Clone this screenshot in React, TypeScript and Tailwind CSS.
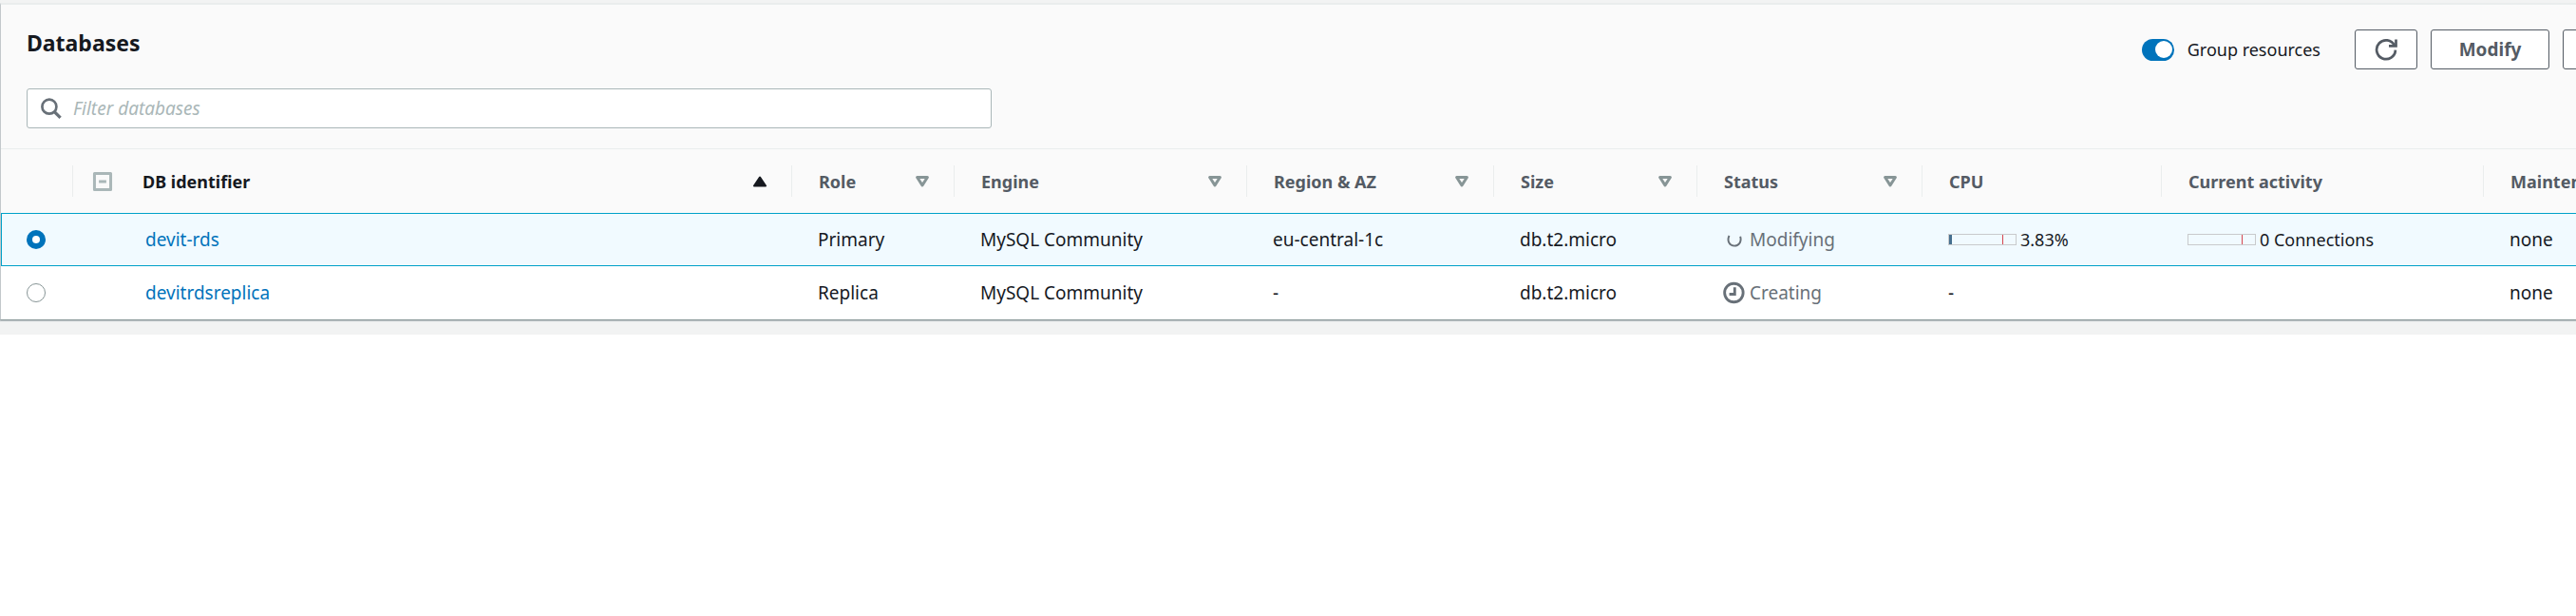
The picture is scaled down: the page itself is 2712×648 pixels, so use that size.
import { useState, type ReactNode } from "react";

type Sort = "asc" | "none" | null;

const columns: { label: string; width: string; sort: Sort }[] = [
  { label: "DB identifier", width: "w-[757px]", sort: "asc" },
  { label: "Role", width: "w-[171px]", sort: "none" },
  { label: "Engine", width: "w-[308px]", sort: "none" },
  { label: "Region & AZ", width: "w-[260px]", sort: "none" },
  { label: "Size", width: "w-[214px]", sort: "none" },
  { label: "Status", width: "w-[237px]", sort: "none" },
  { label: "CPU", width: "w-[252px]", sort: null },
  { label: "Current activity", width: "w-[339px]", sort: null },
  { label: "Maintenance", width: "w-auto", sort: null },
];

function Icon({ children, className = "" }: { children: ReactNode; className?: string }) {
  return (
    <svg
      viewBox="0 0 16 16"
      className={`size-6 shrink-0 ${className}`}
      fill="none"
      stroke="currentColor"
      strokeWidth="2"
      aria-hidden="true"
    >
      {children}
    </svg>
  );
}

function SortIcon({ sort }: { sort: Sort }) {
  return sort === "asc" ? (
    <Icon className="text-[#16191f]">
      <path d="M4 11h8L8 5z" fill="currentColor" strokeWidth="1.4" strokeLinejoin="round" />
    </Icon>
  ) : (
    <Icon className="text-[#879596]">
      <path d="M4.4 5h7.2L8 10.6z" strokeWidth="2" strokeLinejoin="round" />
    </Icon>
  );
}

function Meter({ fill, label }: { fill: number; label: string }) {
  return (
    <div className="flex items-center gap-1 text-[18px]">
      <svg width="72" height="12" aria-hidden="true" shapeRendering="crispEdges">
        <rect x="0.5" y="0.5" width="71" height="11" fill="none" stroke="#c8cacc" />
        <rect x="1" y="1" width={fill} height="10" fill="#466f8f" />
        <rect x="57" y="1" width="1" height="10" fill="#d64550" />
      </svg>
      <span>{label}</span>
    </div>
  );
}

const rows = [
  {
    id: "devit-rds",
    role: "Primary",
    region: "eu-central-1c",
    status: "Modifying",
    cpu: <Meter fill={3} label="3.83%" />,
    activity: <Meter fill={0} label="0 Connections" />,
  },
  {
    id: "devitrdsreplica",
    role: "Replica",
    region: "-",
    status: "Creating",
    cpu: "-",
    activity: "",
  },
];

function StatusIcon({ status }: { status: string }) {
  return status === "Modifying" ? (
    <Icon>
      <path d="M4.3 5.2C2.6 9 4.6 12.4 8 12.4C11.2 12.4 13.2 9.4 12.1 5.8" strokeWidth="1.3" />
    </Icon>
  ) : (
    <Icon>
      <circle cx="7.6" cy="8" r="6.5" strokeWidth="1.9" />
      <path d="M8.2 4.2v4.8H4.4" strokeWidth="1.9" />
    </Icon>
  );
}

const button =
  "flex h-[42px] shrink-0 items-center justify-center rounded-[3px] border border-[#545b64] bg-white text-[19px] font-bold text-[#545b64]";

export default function App() {
  const [selected, setSelected] = useState("devit-rds");
  const [grouped, setGrouped] = useState(true);

  return (
    <main className="overflow-hidden bg-[#f2f3f3] pb-[15px] font-['Noto_Sans','Open_Sans',sans-serif] text-[18px] leading-[26px] text-[#16191f]">
      <section className="mt-[3px] border-t-2 border-b border-l border-t-[#eaeded] border-b-[#879596] border-l-[#c3c8cb] bg-[#fafafa] shadow-[0_1px_1px_#c3c8cb]">
        <header className="flex flex-col gap-[20px] border-b border-[#eaeded] px-[27px] pt-[26px] pb-[21px]">
          <div className="flex h-[42px] items-center justify-between">
            <h1 className="self-start text-[23px] leading-[28px] font-bold">Databases</h1>
            <div className="-mr-[153px] flex items-center gap-[14px]">
              <label className="mr-[22px] flex items-center gap-[14px]">
                <input
                  type="checkbox"
                  role="switch"
                  checked={grouped}
                  onChange={(e) => setGrouped(e.target.checked)}
                  className="flex h-[23px] w-[34px] appearance-none items-center rounded-full bg-[#879596] px-[2px] before:size-[18px] before:rounded-full before:bg-white checked:justify-end checked:bg-[#0073bb]"
                />
                Group resources
              </label>
              <button type="button" aria-label="Refresh" className={`${button} w-[66px]`}>
                <Icon>
                  <path d="M10 5.6h5V1" strokeWidth="1.8" />
                  <path d="M14.6 8.4A6.6 6.6 0 1 1 13.9 5.2" strokeWidth="1.8" />
                </Icon>
              </button>
              <button type="button" className={`${button} w-[125px]`}>
                Modify
              </button>
              <button type="button" aria-label="Actions" className={`${button} w-[140px]`} />
            </div>
          </div>
          <div className="flex h-[42px] w-[1016px] max-w-full items-center gap-[11px] rounded-[3px] border border-[#aab7b8] bg-white px-[13px]">
            <Icon className="text-[#687078]">
              <circle cx="6.6" cy="6.8" r="5" strokeWidth="1.8" />
              <path d="M10.2 10.4l4.2 4.2" strokeWidth="2.2" />
            </Icon>
            <input
              type="text"
              aria-label="Filter databases"
              placeholder="Filter databases"
              className="min-w-0 flex-1 bg-transparent text-[19px] outline-none placeholder:text-[#aab7b8] placeholder:italic"
            />
          </div>
        </header>

        <table className="w-[calc(100%+4px)] table-fixed border-collapse text-left whitespace-nowrap">
          <thead>
            <tr className="h-[67px] text-[#545b64]">
              <th className="w-[75px] p-0" aria-label="Selection" />
              {columns.map((c, i) => (
                <th key={c.label} className={`${c.width} p-0 font-bold`} aria-sort={c.sort === "asc" ? "ascending" : undefined}>
                  <div
                    className={`flex h-[33px] items-center border-l border-[#eaeded] pr-[21px] ${i === 0 ? "gap-[30px] pl-[19px] text-[#16191f]" : "pl-7"}`}
                  >
                    {i === 0 && (
                      <button type="button" aria-label="Collapse all" className="text-[#aab7b8]">
                        <Icon>
                          <rect x="2.3" y="2.3" width="11.4" height="11.4" strokeWidth="2" strokeLinejoin="round" />
                          <path d="M5.4 8h5.2" strokeWidth="2" />
                        </Icon>
                      </button>
                    )}
                    <span className="flex-1">{c.label}</span>
                    {c.sort && (
                      <button type="button" aria-label={`Sort by ${c.label}`}>
                        <SortIcon sort={c.sort} />
                      </button>
                    )}
                  </div>
                </th>
              ))}
            </tr>
          </thead>
          <tbody className="text-[19px]">
            {rows.map((r) => (
              <tr
                key={r.id}
                className={`h-[56px] *:px-[28px] *:py-0 *:first:pl-[27px] ${selected === r.id ? "bg-[#f1faff] outline -outline-offset-1 outline-[#00a1c9]" : "bg-white"}`}
              >
                <td>
                  <input
                    type="radio"
                    name="database"
                    aria-label={r.id}
                    checked={selected === r.id}
                    onChange={() => setSelected(r.id)}
                    className="block size-5 appearance-none rounded-full border border-[#879596] bg-white checked:border-[6px] checked:border-[#0073bb]"
                  />
                </td>
                <td>
                  <a href={`#${r.id}`} className="ml-[49px] text-[#0073bb]">
                    {r.id}
                  </a>
                </td>
                <td>{r.role}</td>
                <td>MySQL Community</td>
                <td>{r.region}</td>
                <td>db.t2.micro</td>
                <td>
                  <div className="flex items-center gap-1 text-[#687078]">
                    <StatusIcon status={r.status} />
                    {r.status}
                  </div>
                </td>
                <td>{r.cpu}</td>
                <td>{r.activity}</td>
                <td>none</td>
              </tr>
            ))}
          </tbody>
        </table>
      </section>
    </main>
  );
}
